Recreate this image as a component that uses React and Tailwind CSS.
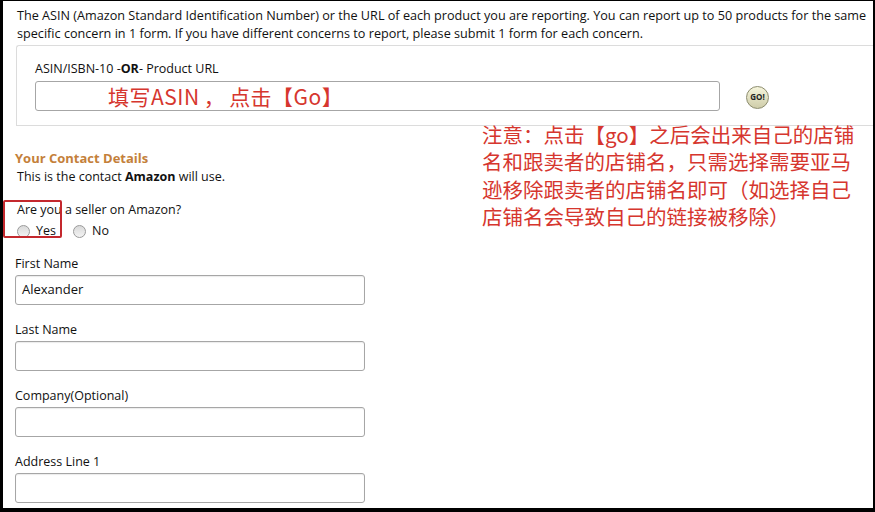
import React from 'react';

const sans = { fontFamily: '"Open Sans", "Noto Sans", Arial, sans-serif' };
const cjk = { fontFamily: '"Noto Sans CJK SC", "Noto Sans", sans-serif' };

function Field({ label, value }) {
  return (
    <div className="flex flex-col">
      <label className="text-[12.5px] leading-[16px] text-[#111]">{label}</label>
      <div className="mt-[3px] w-[350px] h-[30px] border border-[#a6a6a6] rounded-[3px] shadow-[inset_0_1px_1px_rgba(0,0,0,0.08)] flex items-center px-[6px] text-[13px] text-[#111]">
        {value}
      </div>
    </div>
  );
}

function Radio({ label }) {
  return (
    <label className="flex items-center gap-[6px]">
      <span className="w-[13px] h-[13px] rounded-full border border-[#9a9a9a] bg-gradient-to-b from-[#d9d9d9] to-[#f4f4f4]"></span>
      <span className="text-[12.5px] text-[#111]">{label}</span>
    </label>
  );
}

export default function App() {
  return (
    <div
      className="relative w-[875px] h-[512px] bg-white overflow-hidden border-l-[3px] border-t border-r-2 border-b-4 border-black"
      style={sans}
    >
      {/* intro text */}
      <div className="pl-[14px] pr-2 pt-[5px] text-[12.65px] leading-[18px] text-[#111] whitespace-nowrap">
        <p>The ASIN (Amazon Standard Identification Number) or the URL of each product you are reporting. You can report up to 50 products for the same</p>
        <p>specific concern in 1 form. If you have different concerns to report, please submit 1 form for each concern.</p>
      </div>

      {/* ASIN box */}
      <div className="ml-[13px] mt-[3px] w-[900px] border border-r-0 border-[#dcdcdc] rounded-tl-[3px] pl-[18px] pt-[15px] pb-[14px]">
        <div className="text-[12.5px] leading-[16px] text-[#111]">
          ASIN/ISBN-10 -<b>OR</b>- Product URL
        </div>
        <div className="flex items-center mt-[4px]">
          <div className="w-[685px] h-[30px] border border-[#a6a6a6] rounded-[3px] flex items-center pl-[72px]">
            <span className="text-[21px] leading-none tracking-[0.5px] text-[#d6362e] whitespace-nowrap" style={cjk}>
              填写ASIN<span className="mx-[4px]">，</span>点击【Go】
            </span>
          </div>
          <div className="ml-[26px] mt-[2px] w-[23px] h-[23px] rounded-full border border-[#8c8c6e] bg-gradient-to-b from-[#f6f5dc] to-[#cfcdaa] flex items-center justify-center text-[8px] font-bold text-[#222]">
            GO!
          </div>
        </div>
      </div>

      {/* contact details */}
      <div className="pl-[12px] pt-[24px]">
        <div className="text-[13px] leading-[16px] font-bold text-[#c4803a]">Your Contact Details</div>
        <div className="mt-[2px] text-[12.5px] leading-[18px] text-[#111] pl-[2px]">
          This is the contact <b>Amazon</b> will use.
        </div>

        <div className="pl-[2px] mt-[16px]">
          <div className="text-[12.5px] leading-[16px] text-[#111]">Are you a seller on Amazon?</div>
          <div className="flex items-center gap-[17px] mt-[4px]">
            <Radio label="Yes" />
            <Radio label="No" />
          </div>
        </div>

        <div className="flex flex-col gap-[17px] mt-[15px]">
          <Field label="First Name" value="Alexander" />
          <Field label="Last Name" />
          <Field label="Company(Optional)" />
          <Field label="Address Line 1" />
        </div>
      </div>

      {/* annotations */}
      <div className="absolute left-0 top-[199px] w-[59px] h-[38px] border-2 border-[#c4282d] rounded-[2px]"></div>
      <div
        className="absolute left-[479px] top-[120px] text-[20.5px] leading-[27.3px] text-[#d6362e] whitespace-nowrap"
        style={cjk}
      >
        <div>注意：点击【go】之后会出来自己的店铺</div>
        <div>名和跟卖者的店铺名，只需选择需要亚马</div>
        <div>逊移除跟卖者的店铺名即可（如选择自己</div>
        <div>店铺名会导致自己的链接被移除）</div>
      </div>
    </div>
  );
}
